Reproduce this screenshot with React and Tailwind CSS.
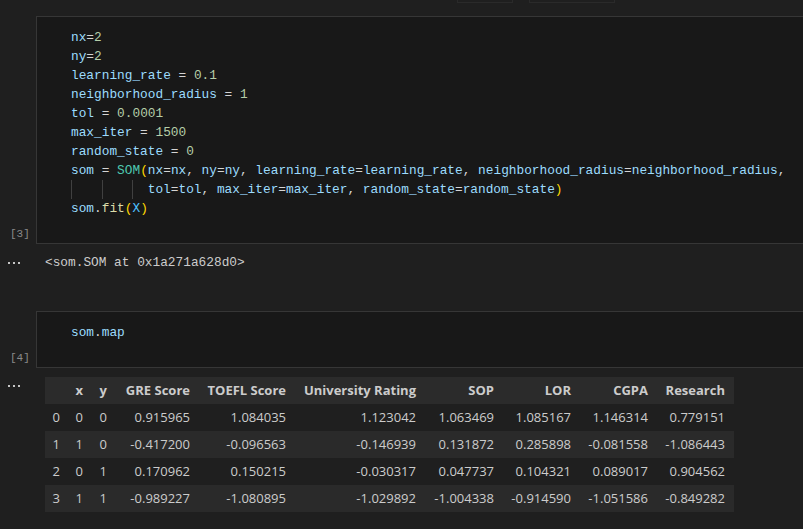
const mono = { fontFamily: '"Liberation Mono", monospace' };

const COLS = ['', 'x', 'y', 'GRE Score', 'TOEFL Score', 'University Rating', 'SOP', 'LOR', 'CGPA', 'Research'];
const WIDTHS = ['w-[24px]', 'w-[23px]', 'w-[24px]', 'w-[83px]', 'w-[96px]', 'w-[130px]', 'w-[78px]', 'w-[77px]', 'w-[77px]', 'w-[77px]'];
const ROWS = [
  ['0', '0', '0', '0.915965', '1.084035', '1.123042', '1.063469', '1.085167', '1.146314', '0.779151'],
  ['1', '1', '0', '-0.417200', '-0.096563', '-0.146939', '0.131872', '0.285898', '-0.081558', '-1.086443'],
  ['2', '0', '1', '0.170962', '0.150215', '-0.030317', '0.047737', '0.104321', '0.089017', '0.904562'],
  ['3', '1', '1', '-0.989227', '-1.080895', '-1.029892', '-1.004338', '-0.914590', '-1.051586', '-0.849282'],
];

const V = ({ children }) => <span className="text-[#9cdcfe]">{children}</span>;
const N = ({ children }) => <span className="text-[#b5cea8]">{children}</span>;
const O = ({ children }) => <span className="text-[#d4d4d4]">{children}</span>;
const P = ({ children }) => <span className="text-[#ffd700]">{children}</span>;

function Dots() {
  return (
    <div className="flex gap-[3px] pl-[8px]">
      <div className="w-[2px] h-[2px] bg-[#c5c5c5]" />
      <div className="w-[2px] h-[2px] bg-[#c5c5c5]" />
      <div className="w-[2px] h-[2px] bg-[#c5c5c5]" />
    </div>
  );
}

function Guide({ w }) {
  return <span className={`inline-block h-[19px] align-top border-l border-[#404040] ${w}`} />;
}

function CodeCell({ count, height, children }) {
  return (
    <div className="flex w-[808px]">
      <div className="w-[36px] shrink-0 flex flex-col justify-end pb-[3px] pl-[10px]">
        <span className="text-[11px] leading-[14px] text-[#8a8a8a]" style={mono}>[{count}]</span>
      </div>
      <div
        className={`w-[772px] shrink-0 border border-[#363636] bg-[#181818] pl-[34px] pt-[11px] text-[12.8px] leading-[19px] whitespace-pre ${height}`}
        style={mono}
      >
        {children}
      </div>
    </div>
  );
}

export default function App() {
  return (
    <div className="w-[803px] h-[529px] bg-[#1f1f1f] overflow-hidden">
      <div className="h-[16px] relative">
        <div className="absolute left-[457px] top-[-20px] w-[56px] h-[23px] border border-[#2a2a2a]" />
        <div className="absolute left-[529px] top-[-20px] w-[86px] h-[23px] border border-[#2a2a2a]" />
      </div>

      <CodeCell count={3} height="h-[228px]">
        <div><V>nx</V><O>=</O><N>2</N></div>
        <div><V>ny</V><O>=</O><N>2</N></div>
        <div><V>learning_rate</V><O> = </O><N>0.1</N></div>
        <div><V>neighborhood_radius</V><O> = </O><N>1</N></div>
        <div><V>tol</V><O> = </O><N>0.0001</N></div>
        <div><V>max_iter</V><O> = </O><N>1500</N></div>
        <div><V>random_state</V><O> = </O><N>0</N></div>
        <div>
          <V>som</V><O> = </O><span className="text-[#4ec9b0]">SOM</span><P>(</P>
          <V>nx</V><O>=</O><V>nx</V><O>, </O><V>ny</V><O>=</O><V>ny</V><O>, </O>
          <V>learning_rate</V><O>=</O><V>learning_rate</V><O>, </O>
          <V>neighborhood_radius</V><O>=</O><V>neighborhood_radius</V><O>,</O>
        </div>
        <div>
          <Guide w="w-[4ch]" /><Guide w="w-[4ch]" /><Guide w="w-[2ch]" />
          <V>tol</V><O>=</O><V>tol</V><O>, </O><V>max_iter</V><O>=</O><V>max_iter</V><O>, </O>
          <V>random_state</V><O>=</O><V>random_state</V><P>)</P>
        </div>
        <div>
          <V>som</V><O>.</O><span className="text-[#dcdcaa]">fit</span><P>(</P>
          <span className="text-[#4fc1ff]">X</span><P>)</P>
        </div>
      </CodeCell>

      <div className="h-[67px] flex items-start pt-[9px]">
        <div className="w-[45px] shrink-0 h-[19px] flex items-center"><Dots /></div>
        <div className="text-[12.8px] leading-[19px] text-[#cccccc]" style={mono}>
          {'<som.SOM at 0x1a271a628d0>'}
        </div>
      </div>

      <CodeCell count={4} height="h-[57px]">
        <div><V>som</V><O>.</O><V>map</V></div>
      </CodeCell>

      <div className="flex pt-[9px]">
        <div className="w-[45px] shrink-0 pt-[8px]"><Dots /></div>
        <div className="text-[13px] text-[#cccccc]" style={{ fontFamily: '"Open Sans", sans-serif' }}>
          <div className="flex h-[27px] items-center bg-[#2b2b2b] font-bold">
            {COLS.map((c, i) => (
              <div key={i} className={`${WIDTHS[i]} text-right pr-[9px] whitespace-nowrap`}>{c}</div>
            ))}
          </div>
          {ROWS.map((r, ri) => (
            <div key={ri} className={`flex h-[27px] items-center ${ri % 2 ? 'bg-[#2a2a2a]' : 'bg-[#1f1f1f]'}`}>
              {r.map((c, i) => (
                <div key={i} className={`${WIDTHS[i]} text-right pr-[9px] whitespace-nowrap`}>{c}</div>
              ))}
            </div>
          ))}
        </div>
      </div>
    </div>
  );
}
